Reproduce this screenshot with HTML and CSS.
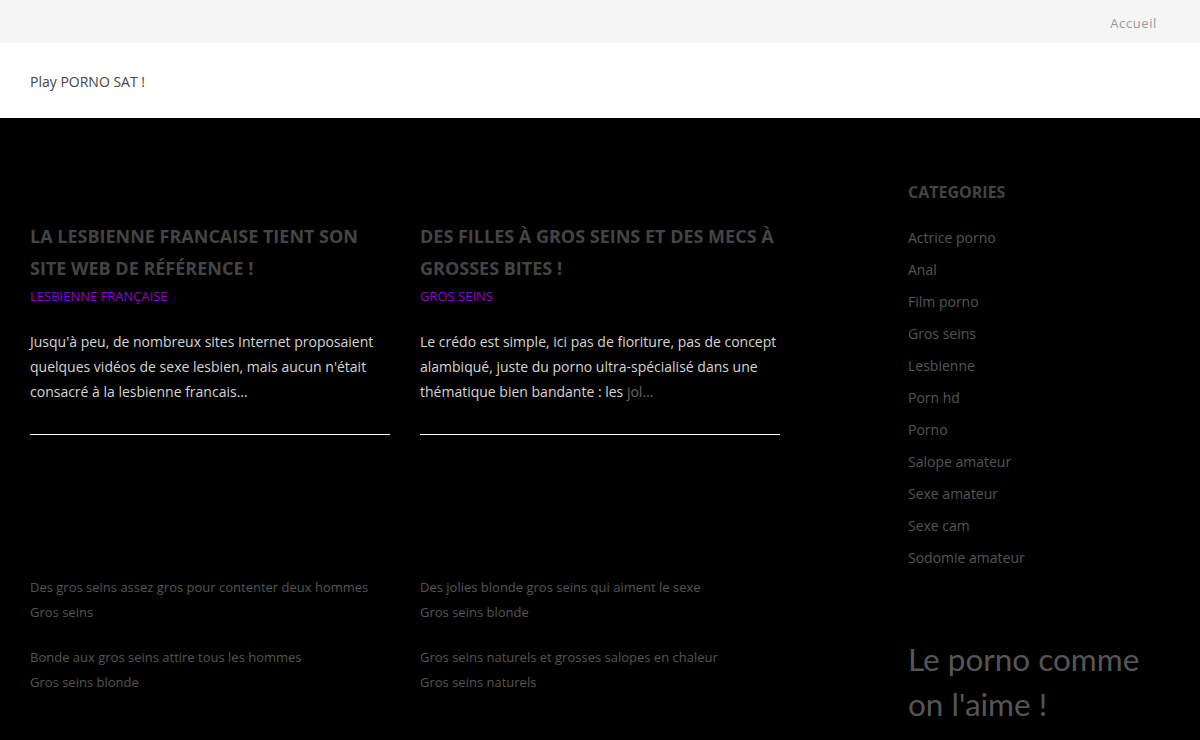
FILE: index.html
```html
<!DOCTYPE html>
<html lang="fr">
<head>
<meta charset="utf-8">
<title>Play PORNO SAT !</title>
<link rel="stylesheet" href="styles.css">
</head>
<body>
<header class="topbar">
  <nav class="topnav"><a href="#">Accueil</a></nav>
</header>
<div class="brand">
  <span class="brand-name">Play PORNO SAT !</span>
</div>
<main class="main">
  <div class="content">
    <div class="posts">
      <article class="post">
        <h2 class="post-title">La lesbienne francaise tient son site web de référence !</h2>
        <div class="post-cat">Lesbienne française</div>
        <p class="post-excerpt">Jusqu'à peu, de nombreux sites Internet proposaient quelques vidéos de sexe lesbien, mais aucun n'était consacré à la lesbienne francais…</p>
      </article>
      <article class="post">
        <h2 class="post-title">Des filles à gros seins et des mecs à grosses bites !</h2>
        <div class="post-cat">Gros seins</div>
        <p class="post-excerpt">Le crédo est simple, ici pas de fioriture, pas de concept alambiqué, juste du porno ultra-spécialisé dans une thématique bien bandante : les <a class="more" href="#">jol…</a></p>
      </article>
    </div>
    <div class="related">
      <ul class="rel-list">
        <li><span>Des gros seins assez gros pour contenter deux hommes</span><span>Gros seins</span></li>
        <li><span>Bonde aux gros seins attire tous les hommes</span><span>Gros seins blonde</span></li>
      </ul>
      <ul class="rel-list">
        <li><span>Des jolies blonde gros seins qui aiment le sexe</span><span>Gros seins blonde</span></li>
        <li><span>Gros seins naturels et grosses salopes en chaleur</span><span>Gros seins naturels</span></li>
      </ul>
    </div>
  </div>
  <aside class="sidebar">
    <h3 class="widget-title">Categories</h3>
    <ul class="cat-list">
      <li>Actrice porno</li>
      <li>Anal</li>
      <li>Film porno</li>
      <li>Gros seins</li>
      <li>Lesbienne</li>
      <li>Porn hd</li>
      <li>Porno</li>
      <li>Salope amateur</li>
      <li>Sexe amateur</li>
      <li>Sexe cam</li>
      <li>Sodomie amateur</li>
    </ul>
    <p class="tagline">Le porno comme on l'aime !</p>
  </aside>
</main>
</body>
</html>
```

FILE: styles.css
```css
html, body {
  margin: 0;
  padding: 0;
}
body {
  font-family: "Open Sans", "Liberation Sans", sans-serif;
  background: #000;
  width: 1200px;
  height: 740px;
  overflow: hidden;
}
.topbar {
  background: #f5f5f5;
  height: 43px;
  display: flex;
  justify-content: flex-end;
  align-items: center;
  padding: 0 43px 0 30px;
}
.topnav a {
  font-size: 13px;
  letter-spacing: 0.6px;
  color: #999;
  text-decoration: none;
  line-height: 20px;
}
.brand {
  background: #fff;
  height: 75px;
  display: flex;
  align-items: center;
  padding: 0 30px;
}
.brand-name {
  font-size: 14px;
  color: #444;
  line-height: 20px;
  position: relative;
  top: 1px;
}
.main {
  display: flex;
  padding: 60px 30px 0 30px;
  gap: 128px;
}
.content {
  width: 750px;
  padding-top: 43px;
}
.posts {
  display: grid;
  grid-template-columns: 360px 360px;
  gap: 30px;
}
.post {
  border-bottom: 1px solid #fff;
  padding-bottom: 30px;
}
.post-title {
  margin: 0;
  font-size: 18px;
  font-weight: 700;
  line-height: 31.5px;
  text-transform: uppercase;
  color: #444;
}
.post-cat {
  font-size: 13px;
  line-height: 25px;
  text-transform: uppercase;
  color: #9400d3;
}
.post-excerpt {
  margin: 20px 0 0 0;
  font-size: 14px;
  line-height: 25px;
  color: #d6d6d6;
}
.more {
  color: #666;
  text-decoration: none;
}
.related {
  display: grid;
  grid-template-columns: 360px 360px;
  gap: 30px;
  margin-top: 140px;
}
.rel-list {
  list-style: none;
  margin: 0;
  padding: 0;
  display: flex;
  flex-direction: column;
  gap: 20px;
}
.rel-list li {
  display: flex;
  flex-direction: column;
  font-size: 13px;
  line-height: 25px;
  color: #555;
}
.sidebar {
  width: 262px;
}
.widget-title {
  margin: 0;
  font-size: 16px;
  font-weight: 700;
  line-height: 28px;
  text-transform: uppercase;
  color: #444;
}
.cat-list {
  list-style: none;
  margin: 16px 0 0 0;
  padding: 0;
}
.cat-list li {
  font-size: 14px;
  line-height: 32px;
  color: #555;
}
.tagline {
  margin: 63px 0 0 0;
  font-family: Lato, "Liberation Sans", sans-serif;
  font-size: 31.5px;
  line-height: 45px;
  color: #555;
}
```
